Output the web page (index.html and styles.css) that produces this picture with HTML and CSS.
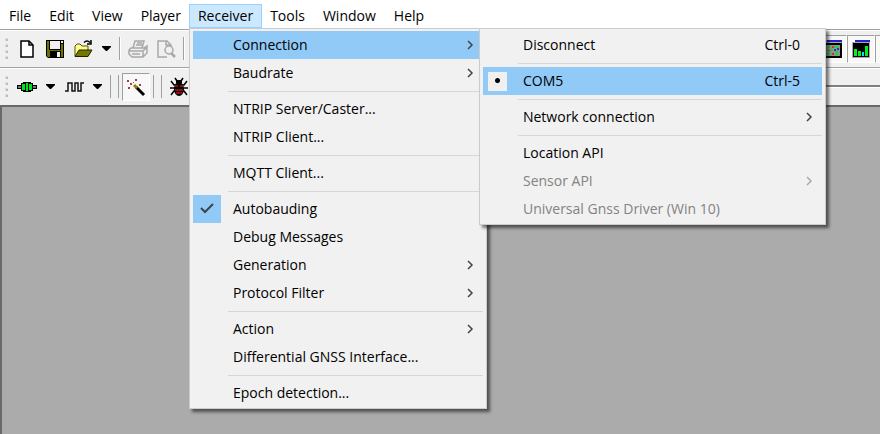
FILE: index.html
```html
<!DOCTYPE html>
<html lang="en">
<head>
<meta charset="utf-8">
<title>Receiver menu</title>
<link rel="stylesheet" href="styles.css">
</head>
<body>
<svg class="defs" aria-hidden="true">
  <symbol id="chevron" viewBox="0 0 8 10"><path d="M2 1 6 5 2 9" fill="none" stroke="currentColor" stroke-width="1.5"/></symbol>
  <symbol id="caret" viewBox="0 0 9 5"><path d="M0 0h9v1L5 5H4L0 1z"/></symbol>
</svg>
<nav class="menubar" aria-label="Main menu">
  <button>File</button>
  <button>Edit</button>
  <button>View</button>
  <button>Player</button>
  <div class="entry">
    <button class="open" aria-expanded="true">Receiver</button>
    <ul class="menu main">
      <li><button class="active">Connection<svg class="arrow"><use href="#chevron"/></svg></button>
        <ul class="menu sub">
          <li><button>Disconnect<span class="key">Ctrl-0</span></button></li>
          <li class="line"></li>
          <li><button class="active"><span class="radio"></span>COM5<span class="key">Ctrl-5</span></button></li>
          <li class="line"></li>
          <li><button>Network connection<svg class="arrow"><use href="#chevron"/></svg></button></li>
          <li class="line"></li>
          <li><button>Location API</button></li>
          <li><button disabled>Sensor API<svg class="arrow"><use href="#chevron"/></svg></button></li>
          <li><button disabled>Universal Gnss Driver (Win 10)</button></li>
        </ul>
      </li>
      <li><button>Baudrate<svg class="arrow"><use href="#chevron"/></svg></button></li>
      <li class="line"></li>
      <li><button>NTRIP Server/Caster...</button></li>
      <li><button>NTRIP Client...</button></li>
      <li class="line"></li>
      <li><button>MQTT Client...</button></li>
      <li class="line"></li>
      <li><button><svg class="check" viewBox="0 0 28 28"><path d="M8 13 12 17 20 9" fill="none" stroke="#37474f" stroke-width="2"/></svg>Autobauding</button></li>
      <li><button>Debug Messages</button></li>
      <li><button>Generation<svg class="arrow"><use href="#chevron"/></svg></button></li>
      <li><button>Protocol Filter<svg class="arrow"><use href="#chevron"/></svg></button></li>
      <li class="line"></li>
      <li><button>Action<svg class="arrow"><use href="#chevron"/></svg></button></li>
      <li><button>Differential GNSS Interface...</button></li>
      <li class="line"></li>
      <li><button>Epoch detection...</button></li>
    </ul>
  </div>
  <button>Tools</button>
  <button>Window</button>
  <button>Help</button>
</nav>
<div class="toolbar">
  <span class="grip"><i></i><i></i><i></i><i></i></span>
  <button class="tool" aria-label="New"><svg viewBox="0 0 20 20"><path d="M4 2h8l4 4v12H4z" fill="#fff" stroke="#000" stroke-width="1.5"/><path d="M12 2v4h4" fill="none" stroke="#000" stroke-width="1.5"/></svg></button>
  <button class="tool" aria-label="Save"><svg viewBox="0 0 20 20"><path d="M1 1h18v18H3l-2-2z"/><path d="M2 2h2v9h12V5h2v13h-2v-6H5v6H3l-1-1z" fill="#707000"/><path d="M5 2h10v8H5zM16 2h2v2h-2zM12 13h3v5h-3z" fill="#f0f0f0"/></svg></button>
  <button class="tool" aria-label="Open"><svg viewBox="0 0 20 20"><path d="M2 17V7l2-2h3l2 2h6v4" fill="#ffff90" stroke="#555500"/><path d="M2 17.500 6 11h13l-4 6.500z" fill="#777700" stroke="#222200"/><path d="M11 3.500c2-2 4-2 6 0M18 1v4h-4" fill="none" stroke="#000" stroke-width="1.500"/></svg></button>
  <button class="drop" aria-label="Recent files"><svg><use href="#caret"/></svg></button>
  <span class="rule"></span>
  <button class="tool" aria-label="Print"><svg viewBox="0 0 20 20"><g fill="none" stroke="#a8a8a8" stroke-width="1.500"><path d="M5 9 7 2h9l-2 7M3 9h13l3-2v7l-4 4H4l-3-3v-4zM1 12h14l4-4M15 12v6M4 15h8M9 4h5M8 6h6"/></g></svg></button>
  <button class="tool" aria-label="Print preview"><svg viewBox="0 0 20 20"><g fill="none" stroke="#a8a8a8" stroke-width="1.500"><path d="M11 18H2V2h9l4 4v2M10 2v4h4"/><circle cx="13" cy="11" r="4"/><path d="M15 14l4 4" stroke-width="2.500"/></g></svg></button>
  <span class="rule"></span>
  <span class="space"></span>
  <button class="tool framed" aria-label="Satellite view"><svg viewBox="0 0 20 20"><path d="M1 1h18v18H1z" fill="#aaa"/><path d="M4 1h15v2H4z" fill="#2222cc"/><path d="M1 4h18v15H1z"/><path d="M3 6h14v11H3z" fill="#8a9a8a"/><path d="M5 7h2v2H5zM12 7h3v2h-3zM8 10h2v2H8zM13 12h2v2h-2zM4 14h3v2H4zM12 15h3v1h-3z" fill="#00e030"/><path d="M9 7h2v2H9zM5 11h2v1H5zM9 14h2v2H9z" fill="#d03030"/><path d="M11 10h2v2h-2zM14 9h2v2h-2z" fill="#3030d0"/></svg></button>
  <button class="tool framed" aria-label="Signal view"><svg viewBox="0 0 20 20"><path d="M1 1h18v18H1z" fill="#aaa"/><path d="M1 1h3v2H1z" fill="#fff"/><path d="M4 1h15v2H4z" fill="#2222cc"/><path d="M2 4h16v14H2z"/><path d="M3 10h3v7H3zM7 12h3v5H7zM14 7h3v10h-3z" fill="#00f020"/><path d="M11 13h2v4h-2z" fill="#00e0ff"/></svg></button>
  <span class="framed edge"></span>
</div>
<div class="toolbar">
  <span class="grip"><i></i><i></i><i></i><i></i></span>
  <button class="tool" aria-label="Connect"><svg viewBox="0 0 20 20"><path d="M0 8h20v4H0zM4 6h12v8H4zM6 5h8v10H6z"/><path d="M1 9h3v2H1zM16 9h3v2h-3z" fill="#777"/><path d="M5 7h3v6H5zM9 6h2v8H9zM12 7h3v6h-3z" fill="#00e020"/></svg></button>
  <button class="drop" aria-label="Connection ports"><svg><use href="#caret"/></svg></button>
  <button class="tool" aria-label="Baudrate"><svg viewBox="0 0 20 20"><path d="M1 14h3V6h4v8h3V6h3v8h3V6h3" fill="none" stroke="#111" stroke-width="1.500"/></svg></button>
  <button class="drop" aria-label="Baudrates"><svg><use href="#caret"/></svg></button>
  <span class="rule double"></span>
  <button class="tool framed" aria-label="Autobauding"><svg viewBox="0 0 20 20"><path d="M10 10 18 18" stroke="#000" stroke-width="3"/><path d="M8 8 11 11" stroke="#888800" stroke-width="3"/><path d="M1 3h2v2H1zM4 6h2v2H4zM9 2h2v2H9zM7 5h1v1H7zM13 7h2v2h-2zM2 10h2v2H2z" fill="#a04040"/></svg></button>
  <span class="rule double"></span>
  <button class="tool" aria-label="Debug messages"><svg viewBox="0 0 20 20"><path d="M6 1 8 4M14 1l-2 3M2 4l3 4h10l3-4M1 11h18M2 18l3-4h10l3 4" fill="none" stroke="#000" stroke-width="1.500"/><path d="M7 3h6v3H7z"/><ellipse cx="10" cy="12" rx="5" ry="7"/><path d="M6 8h3v2H6zM11 8h3v2h-3zM6 12h8v2H6zM7 15h6v2H7z" fill="#900c0c"/></svg></button>
  <span class="space groove"></span>
</div>
<main class="workspace"></main>
</body>
</html>
```
FILE: styles.css
```css
* { box-sizing: border-box; }
body { margin: 0; min-height: 100vh; display: flex; flex-direction: column; background: #f0f0f0; font: 14px/20px "Open Sans", sans-serif; }
button { font: inherit; color: #000; border: 0; background: none; padding: 0; margin: 0; }
ul { list-style: none; margin: 0; padding: 0; }
.defs { position: absolute; width: 0; height: 0; }

.menubar { display: flex; background: #fff; height: 29px; padding-top: 4px; }
.menubar > button, .entry > button { padding: 0 8px; height: 24px; border: 1px solid transparent; }
.entry { position: relative; margin: 0 -1px; }
.entry > .open { background: #cce8ff; border-color: #99d1ff; }

.menu { position: absolute; z-index: 2; background: #f1f1f1; border: 1px solid #ccc; padding: 2px 3px 1px; box-shadow: 3px 3px 3px #0008; }
.main { top: 24px; left: 0; width: 298px; }
.sub { left: 286px; top: -3px; width: 347px; }
.menu li { position: relative; }
.menu li > button { display: flex; align-items: center; width: 100%; height: 28px; padding-left: 40px; text-align: left; }
.menu .active { background: #91c9f7; }
.menu .line { height: 1px; margin: 4px 0 3px 35px; background: #d7d7d7; }
.menu button:disabled { color: #838383; }
.arrow { width: 8px; height: 10px; margin-left: auto; margin-right: 9px; color: #444; }
button:disabled .arrow { color: #aaa; }
.key { margin-left: auto; margin-right: 22px; }
.check { position: absolute; left: 0; width: 28px; height: 28px; background: #91c9f7; }
.radio { position: absolute; left: 5px; width: 19px; height: 19px; background: radial-gradient(circle at 50% 45%, #000 2px, #f0f0f0 3px); }

.toolbar { display: flex; align-items: center; height: 38px; padding-left: 5px; border-top: 1px solid #a0a0a0; box-shadow: inset 0 1px #fff; }
.grip { display: flex; flex-direction: column; gap: 3px; width: 8px; }
.grip i { width: 3px; height: 3px; background: #bbb; border-top: 1px solid #ddd; border-left: 1px solid #ddd; }
.tool { display: flex; align-items: center; justify-content: center; width: 28px; height: 28px; }
.tool svg { width: 20px; height: 20px; }
.drop { display: flex; justify-content: center; width: 19px; }
.drop svg { width: 9px; height: 5px; }
.rule { width: 2px; height: 23px; margin: 0 3px; border-left: 1px solid #a0a0a0; border-right: 1px solid #fff; }
.double { width: 9px; border-right-color: #a0a0a0; }
.framed { background: #f8f8f8; border: 1px solid #fff; border-top-color: #a0a0a0; border-left-color: #a0a0a0; }
.edge { width: 5px; height: 28px; border-right: 0; }
.space { flex: 1; }
.groove { height: 3px; border-top: 2px solid #808080; border-bottom: 1px solid #fff; }
.workspace { flex: 1; background: #ababab; border-top: 2px solid #696969; border-left: 2px solid #696969; }
```
